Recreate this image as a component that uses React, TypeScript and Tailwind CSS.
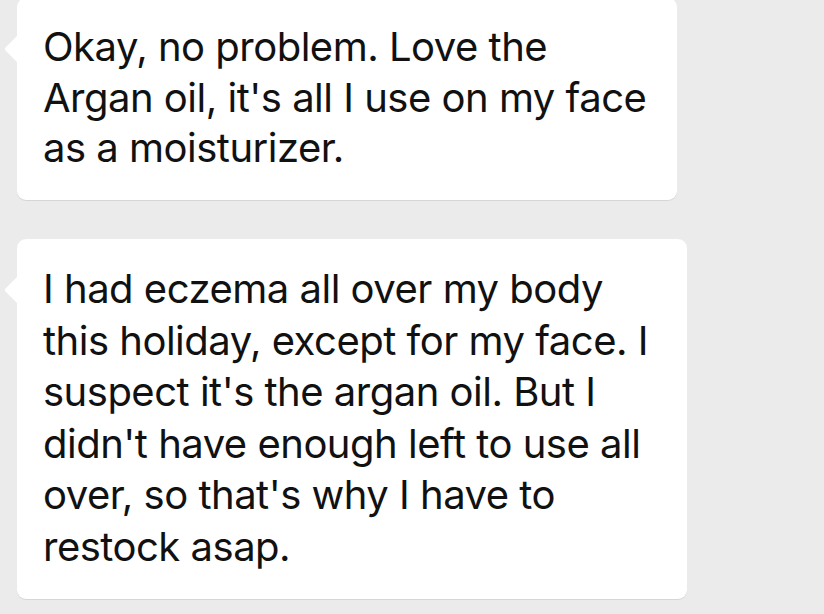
export default function App() {
  const bubbleText = "text-[40px] text-[#111111] tracking-[-0.5px] whitespace-nowrap"

  return (
    <div className="w-[824px] h-[614px] overflow-hidden bg-[#ebebeb] font-['Inter',sans-serif]">
      <div className="flex flex-col gap-[39px] pl-[17px] -mt-[2px]">
        {/* first message */}
        <div className="relative w-[660px] h-[202px] bg-white rounded-[9px] shadow-[0_1px_0_#d6d6d6] pl-[26px] pt-[24px]">
          <Tail />
          <p className={bubbleText + " leading-[50.5px]"}>
            Okay, no problem. Love the
            <br />
            Argan oil, it's all I use on my face
            <br />
            as a moisturizer.
          </p>
        </div>

        {/* second message */}
        <div className="relative w-[670px] h-[360px] bg-white rounded-[9px] shadow-[0_1px_0_#d6d6d6] pl-[26px] pt-[24px]">
          <Tail />
          <p className={bubbleText + " leading-[51.6px]"}>
            I had eczema all over my body
            <br />
            this holiday, except for my face. I
            <br />
            suspect it's the argan oil. But I
            <br />
            didn't have enough left to use all
            <br />
            over, so that's why I have to
            <br />
            restock asap.
          </p>
        </div>
      </div>
    </div>
  )
}

function Tail() {
  return (
    <svg
      className="absolute left-[-13px] top-[37px]"
      width="14"
      height="28"
      viewBox="0 0 14 28"
    >
      <path d="M14 0 L1.5 12.5 Q0 14 1.5 15.5 L14 28 Z" fill="#ffffff" />
    </svg>
  )
}
